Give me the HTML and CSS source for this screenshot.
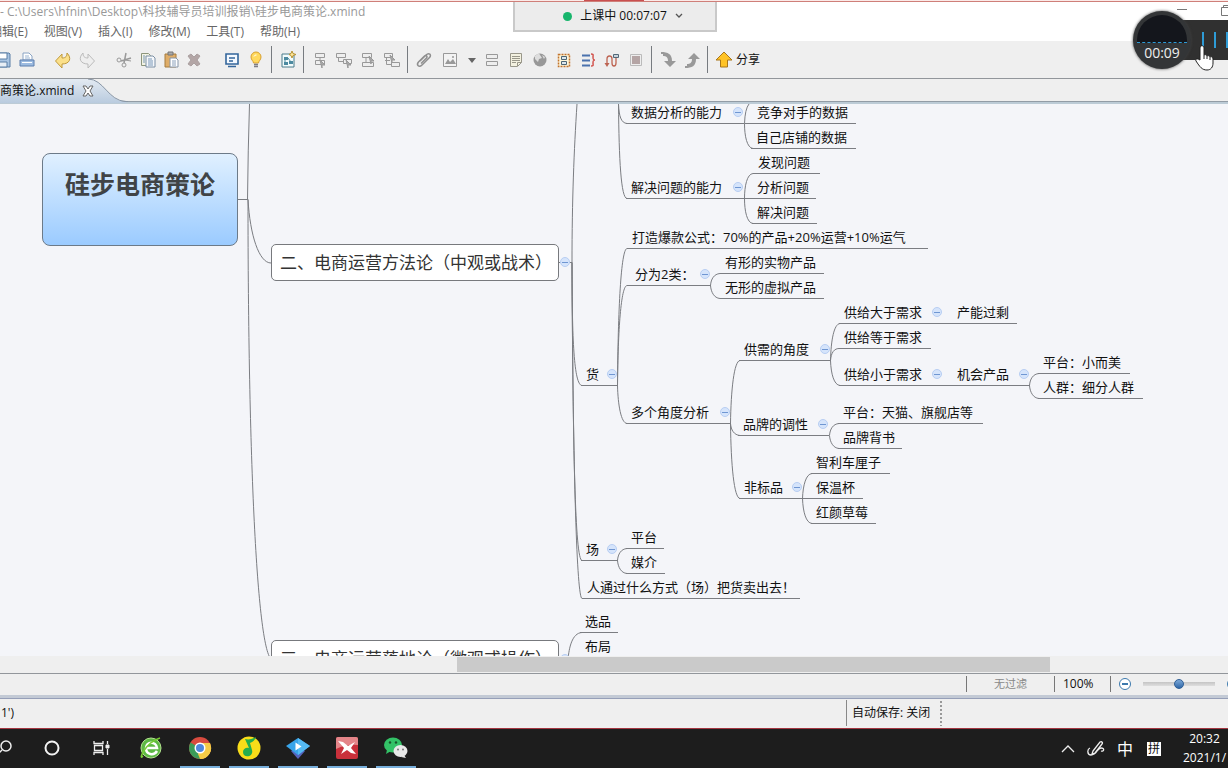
FILE: index.html
```html
<!DOCTYPE html>
<html lang="zh-CN">
<head>
<meta charset="utf-8">
<title>硅步电商策论.xmind</title>
<link rel="stylesheet" href="styles.css">
</head>
<body>
<header class="titlebar">
  <span class="path">- C:\Users\hfnin\Desktop\科技辅导员培训报销\硅步电商策论.xmind</span>
  <span class="winbtns">
    <svg width="56" height="12" viewBox="0 0 56 12" fill="none" stroke="#777"><path d="M5 5.500h10M49.500 3.500h9v8h-9zM51.500 3.500v-2h6"/></svg>
  </span>
</header>
<nav class="menubar">
  <button>编辑(E)</button><button>视图(V)</button><button>插入(I)</button><button>修改(M)</button><button>工具(T)</button><button>帮助(H)</button>
</nav>
<div class="toolbar">
  <div class="group g-file">
    <button aria-label="保存"><svg viewBox="0 0 20 20"><path d="M3 3h13l1 1v13H3z" fill="#a9c4e2" stroke="#5b7fa6"/><path d="M6 3h8v6H6z" fill="#fff" stroke="#5b7fa6"/><path d="M6 12h8v5H6z" fill="#e8eef5" stroke="#5b7fa6"/></svg></button>
    <button aria-label="打印"><svg viewBox="0 0 20 20"><path d="M6 10V3h6l3 3v4z" fill="#fff" stroke="#8aa4c4"/><path d="M8 6h4M8 8h5" stroke="#9bb4d0"/><path d="M3 10h14v6H3z" fill="#9dbbe0" stroke="#5c7fae"/><path d="M5 12.500h10" stroke="#fff"/></svg></button>
  </div>
  <div class="group g-undo">
    <button aria-label="撤销"><svg viewBox="0 0 20 20"><path d="M2.500 11l6.500-7v4c4 0 5-2 5-5 5 5 3 11-5 11v4z" fill="#fbe08a" stroke="#c09a3c"/></svg></button>
    <button aria-label="重做"><svg viewBox="0 0 20 20"><path d="M17.500 11l-6.500-7v4c-4 0-5-2-5-5-5 5-3 11 5 11v4z" fill="#eee" stroke="#bbb"/></svg></button>
  </div>
  <div class="group g-edit">
    <button aria-label="剪切"><svg viewBox="0 0 20 20" fill="none" stroke="#999"><path d="M11 3L9 13M16 8L6 11" stroke-width="1.500"/><circle cx="9" cy="15" r="2"/><circle cx="4" cy="10" r="2"/><path d="M10 10l6 1"/></svg></button>
    <button aria-label="复制"><svg viewBox="0 0 20 20"><path d="M3.500 3.500h7l2 2v10h-9z" fill="#f3f3e4" stroke="#8c957b"/><path d="M8 6h7l2 2v9H8z" fill="#f6f8fb" stroke="#7b8fa5"/><path d="M10 9h4M10 11h5M10 13h5M10 15h5M5 6h2M5 8h2M5 10h2M5 12h2" stroke="#7897b7"/></svg></button>
    <button aria-label="粘贴"><svg viewBox="0 0 20 20"><path d="M4 4h11v13H4z" fill="#dfad68" stroke="#a67c3e"/><path d="M7 2h5v3H7z" fill="#aaa" stroke="#777"/><path d="M9 8h6l2 2v7H9z" fill="#fff" stroke="#8595a8"/><path d="M11 11h4M11 13h4M11 15h4" stroke="#8aa0ba"/></svg></button>
    <button aria-label="删除"><svg viewBox="0 0 20 20"><path d="M4 6l3-2 3 3 3-3 3 2-3 4 3 4-3 2-3-3-3 3-3-2 3-4z" fill="#b3a6a6" stroke="#aaa0a0"/></svg></button>
  </div>
  <div class="group g-show">
    <button aria-label="演示"><svg viewBox="0 0 20 20"><path d="M4 4h12v10H4z" fill="#f4f9ff" stroke="#33669c" stroke-width="1.600"/><path d="M6 16.500h8M7 8h6M7 11h4" stroke="#33669c" stroke-width="1.300"/></svg></button>
    <button aria-label="灵感"><svg viewBox="0 0 20 20"><path d="M7.500 13c0-2-2.500-3-2.500-6a5 5 0 0110 0c0 3-2.500 4-2.500 6z" fill="#ffd95e" stroke="#d8a030"/><path d="M8 6.500q1-2 2.500-1.500" stroke="#fff" fill="none"/><path d="M8 14.500h4M8 16.500h4" stroke="#7d7d86" stroke-width="1.500"/></svg></button>
  </div>
  <span class="sep"></span>
  <div class="group">
    <button aria-label="导图"><svg viewBox="0 0 20 20"><path d="M4 4h12v13H4z" fill="#f3fbfb" stroke="#4a7c8c"/><path d="M6 7h4v3H6zM6 12h4v3H6zM11 11h4v3h-4z" fill="#4c8aa0"/><path d="M10 8l3 4M7 10v3" stroke="#4c8aa0"/><path d="M14 1l1 2.500 3 1-3 1-1 2.500-1-2.500-2-1 2-1z" fill="#ffe79a" stroke="#b79334"/></svg></button>
  </div>
  <span class="sep"></span>
  <div class="group">
    <button aria-label="主题"><svg viewBox="0 0 20 20" fill="#eee" stroke="#999"><path d="M5.500 3.500h9v4h-9zM5.500 10.500h9v4h-9zM10 7.500v3"/><path d="M10 10l5 5h-3v3z" fill="#aaa"/></svg></button>
    <button aria-label="子主题"><svg viewBox="0 0 20 20" fill="#eee" stroke="#999"><path d="M2.500 3.500h9v4h-9zM9.500 9.500h8v4h-8zM4.500 7.500v4h5"/><path d="M12 10l5 5h-3v3z" fill="#aaa"/></svg></button>
    <button aria-label="上方主题"><svg viewBox="0 0 20 20" fill="#eee" stroke="#999"><path d="M4.500 3.500h9v4h-9zM4.500 12.500h11v4h-11zM8 7.500v5"/><path d="M11 6l5 5h-3v3z" fill="#aaa"/></svg></button>
    <button aria-label="父主题"><svg viewBox="0 0 20 20" fill="#eee" stroke="#999"><path d="M2.500 3.500h8v4h-8zM9.500 12.500h8v4h-8zM4.500 7.500v7h5M3 10.500h5"/><path d="M8 5l5 5h-3v3z" fill="#aaa"/></svg></button>
  </div>
  <span class="sep"></span>
  <div class="group g-insert">
    <button aria-label="附件"><svg viewBox="0 0 20 20" fill="none" stroke="#8e8e8e" stroke-width="1.500"><path d="M6 11l6-6c3-3 6 0 3.500 2.500L8 15c-3 3-6 0-3.500-3l5.500-5.500c2-2 4 0 2.500 1.500L7 13.500"/></svg></button>
  </div>
  <div class="group g-image">
    <button aria-label="图片"><svg viewBox="0 0 20 20"><path d="M3.500 3.500h13v13h-13z" fill="#f3f3f3" stroke="#999"/><path d="M5 14l3-5 2 3 3-3 3 5z" fill="#999"/><circle cx="13" cy="7" r="1" fill="#999"/></svg></button>
    <button class="arrow" aria-label="图片选项"><svg viewBox="0 0 20 20"><path d="M6 8h8l-4 5z" fill="#666"/></svg></button>
  </div>
  <div class="group g-more">
    <button aria-label="标签"><svg viewBox="0 0 20 20" fill="#eee" stroke="#999"><path d="M4.500 4.500h11v4h-11zM4.500 11.500h11v4h-11z"/></svg></button>
    <button aria-label="备注"><svg viewBox="0 0 20 20"><path d="M4.500 3.500h11v9l-4 4h-7z" fill="#f3f1e0" stroke="#99978a"/><path d="M6 6.500h8M6 8.500h8M6 10.500h8M6 12.500h4M11.500 16v-3.500h4" stroke="#99978a" fill="none"/></svg></button>
    <button aria-label="超链接"><svg viewBox="0 0 20 20"><circle cx="10" cy="10" r="6.500" fill="#989898"/><path d="M5 6q4-4 5-1l2 3-3 1-1 3-3-3zM12 5l3 2-1 2z" fill="#ddd"/></svg></button>
    <button aria-label="外框"><svg viewBox="0 0 20 20"><path d="M4.500 4.500h11v12h-11z" fill="#fff6d8" stroke="#c2742c" stroke-width="1.500" stroke-dasharray="2 1"/><path d="M7.500 6.500h5v3h-5zM7.500 11.500h5v3h-5z" fill="#dde8ee" stroke="#4d6675"/></svg></button>
    <button aria-label="概要"><svg viewBox="0 0 20 20" fill="none"><path d="M4 5.500h8M4 10.500h8M4 15.500h8" stroke="#4b72ad" stroke-width="2"/><path d="M13 4c3 0 2 1 2 3s0 3 2 3c-2 0-2 1-2 3s1 3-2 3" stroke="#d2544e" stroke-width="1.500"/></svg></button>
    <button aria-label="联系"><svg viewBox="0 0 20 20" fill="none"><path d="M5 15V9c0-4 5-4 5 0v4c0 4 4 4 4 0V8" stroke="#bd6452" stroke-width="1.300"/><path d="M2.500 13l2.500 4 2.500-4z" fill="#bd6452"/><path d="M11.500 4.500h5v3h-5z" fill="#c9d4dc" stroke="#526878"/></svg></button>
    <button aria-label="图例"><svg viewBox="0 0 20 20"><path d="M4.500 4.500h11v11h-11z" fill="#eee" stroke="#bbb"/><path d="M6 6h8v8H6z" fill="#b5a5a5"/></svg></button>
  </div>
  <span class="sep"></span>
  <div class="group">
    <button aria-label="向下"><svg viewBox="0 0 20 20"><path d="M3 2c7 0 11 2 11 9h4l-6 6-6-6h4c0-4-2-5-5-5V4H3z" fill="#999"/></svg></button>
    <button aria-label="向上"><svg viewBox="0 0 20 20"><path d="M3 18c7 0 11-2 11-9h4l-6-6-6 6h4c0 4-2 5-5 5v2H3z" fill="#999"/></svg></button>
  </div>
  <span class="sep"></span>
  <button class="share"><svg viewBox="0 0 20 20"><path d="M10 2l8 8h-4.500v7h-7v-7H2z" fill="#ffc326" stroke="#a9761b"/></svg>分享</button>
</div>
<div class="tabs">
  <div class="tab">
    <svg class="tabshape" width="128" height="24" viewBox="0 0 128 24"><defs><linearGradient id="tg" x2="0" y2="1"><stop offset="0" stop-color="#e3eaf2"/><stop offset="1" stop-color="#b9cbdf"/></linearGradient></defs><path d="M0 0H88C104 0 108 22 126 23V24H0z" fill="url(#tg)"/><path d="M88 0C104 0 108 22 126 22.500h2" fill="none" stroke="#8795a5"/></svg>
    <span class="tabname">电商策论.xmind</span>
    <button class="close" aria-label="关闭"><svg width="12" height="12" viewBox="0 0 12 12"><path d="M1 1h3l2 3 2-3h3L8 6l3 5H8L6 8l-2 3H1l3-5z" fill="#fff" stroke="#666"/></svg></button>
  </div>
</div>
<main class="canvas">
  <svg class="links" width="1228" height="552" viewBox="0 104 1228 552" fill="none" stroke="#7b7d82">
    <path d="M238 199.500h10M247.500 199.500Q248 150 249.500 104M248 199.500C250 235 259 263 271 263M248 199.500C248 460 257 645 271 659"/>
    <path d="M559 262.500h13M572 262.500C572 200 574 150 577 104M572 262.500C572 340 574 385 582 385.500M572 262.500C573 450 575 560 582 560.500M572 262.500C573 480 577 598 582 598.500M559 659.500h9C569 648 572 633 582 632.500"/>
    <path d="M618.500 104C619 116 621 123 627 123.500M618.500 104C619 160 621 198 627 198.500"/>
    <path d="M744.500 123.500Q745 109 749 104M744.500 123.500C744.500 136 747 148 753 148.500M744.500 123.500h8"/>
    <path d="M744.500 198.500C744.500 186 747 174 753 173.500M744.500 198.500C744.500 211 747 223 753 223.500"/>
    <path d="M617.500 385.500C618 310 621 249 627 248.500M617.500 385.500C618 330 621 286 627 285.500M617.500 385.500C618 405 621 423 627 423.500"/>
    <path d="M710.500 285.500C711 279 714 274 720 273.500M710.500 285.500C711 292 714 298 720 298.500"/>
    <path d="M730.500 423.500C731 390 734 361 740 360.500M730.500 423.500C731 430 734 435 740 435.500M730.500 423.500C731 465 734 498 740 498.500"/>
    <path d="M830.500 360.500C831 340 834 324 840 323.500M830.500 360.500C831 353 834 348 840 348.500M830.500 360.500C831 374 834 385 840 385.500"/>
    <path d="M1029.500 385.500C1030 379 1033 374 1039 373.500M1029.500 385.500C1030 392 1033 398 1039 398.500"/>
    <path d="M829.500 435.500C830 429 833 424 839 423.500M829.500 435.500C830 442 833 448 839 448.500"/>
    <path d="M802.500 498.500C803 485 806 474 812 473.500M802.500 498.500C803 512 806 523 812 523.500"/>
    <path d="M617.500 560.500C618 554 621 549 627 548.500M617.500 560.500C618 567 621 573 627 573.500"/>
  </svg>
  <h1 class="root">硅步电商策论</h1>
  <div class="main main-method">二、电商运营方法论（中观或战术）</div>
  <button class="fold fold-method" aria-label="折叠"></button>
  <div class="main main-practice">三、电商运营落地论（微观或操作）</div>
  <button class="fold fold-practice" aria-label="折叠"></button>

  <div class="node data-skill">数据分析的能力<button class="fold" aria-label="折叠"></button></div>
  <div class="node rival-data">竞争对手的数据</div>
  <div class="node own-data">自己店铺的数据</div>
  <div class="node solve-skill">解决问题的能力<button class="fold" aria-label="折叠"></button></div>
  <div class="node find">发现问题</div>
  <div class="node analyse">分析问题</div>
  <div class="node solve">解决问题</div>
  <div class="node formula">打造爆款公式：70%的产品+20%运营+10%运气</div>
  <div class="node two-kinds">分为2类：<button class="fold" aria-label="折叠"></button></div>
  <div class="node tangible">有形的实物产品</div>
  <div class="node virtual">无形的虚拟产品</div>
  <div class="node goods">货<button class="fold" aria-label="折叠"></button></div>
  <div class="node angles">多个角度分析<button class="fold" aria-label="折叠"></button></div>
  <div class="node supply">供需的角度<button class="fold" aria-label="折叠"></button></div>
  <div class="node supply-more">供给大于需求<button class="fold" aria-label="折叠"></button></div>
  <div class="node surplus">产能过剩</div>
  <div class="node supply-equal">供给等于需求</div>
  <div class="node supply-less">供给小于需求<button class="fold" aria-label="折叠"></button></div>
  <div class="node chance">机会产品<button class="fold" aria-label="折叠"></button></div>
  <div class="node small">平台：小而美</div>
  <div class="node crowd">人群：细分人群</div>
  <div class="node brand">品牌的调性<button class="fold" aria-label="折叠"></button></div>
  <div class="node tmall">平台：天猫、旗舰店等</div>
  <div class="node endorse">品牌背书</div>
  <div class="node nonstandard">非标品<button class="fold" aria-label="折叠"></button></div>
  <div class="node cherry">智利车厘子</div>
  <div class="node cup">保温杯</div>
  <div class="node berry">红颜草莓</div>
  <div class="node place">场<button class="fold" aria-label="折叠"></button></div>
  <div class="node platform">平台</div>
  <div class="node media">媒介</div>
  <div class="node sell">人通过什么方式（场）把货卖出去！</div>
  <div class="node choose">选品</div>
  <div class="node arrange">布局</div>
</main>
<div class="hscroll"><div class="thumb"></div></div>
<div class="viewbar">
  <span class="filter">无过滤</span>
  <span class="percent">100%</span>
  <div class="zoom">
    <button aria-label="缩小"><svg width="14" height="14" viewBox="0 0 14 14" fill="#fff" stroke="#3c79ad"><circle cx="7" cy="7" r="5.500"/><path d="M4 7h6" stroke-width="2"/></svg></button>
    <input type="range" min="0" max="100" value="50" aria-label="缩放">
    <button aria-label="放大"><svg width="14" height="14" viewBox="0 0 14 14" fill="#fff" stroke="#3c79ad"><circle cx="7" cy="7" r="5.500"/><path d="M4 7h6M7 4v6" stroke-width="2"/></svg></button>
  </div>
</div>
<footer class="statusbar">
  <span>1')</span>
  <span class="autosave">自动保存: 关闭</span>
</footer>
<div class="taskbar">
  <div class="apps">
    <button aria-label="搜索"><svg viewBox="0 0 24 24" fill="none" stroke="#eee" stroke-width="1.500"><circle cx="14" cy="10" r="5"/><path d="M10 14l-5 5"/></svg></button>
    <button aria-label="Cortana"><svg viewBox="0 0 24 24" fill="none" stroke="#f2f2f2" stroke-width="2"><circle cx="11" cy="12" r="6.500"/></svg></button>
    <button aria-label="任务视图"><svg viewBox="0 0 24 24" fill="none" stroke="#eee"><path d="M4 5v2.500h9V5M4 19v-2.500h9V19M4.500 9.500h8v5h-8zM17.500 5v3M17.500 13v6" stroke-width="1.300"/><path d="M16 9h3v3h-3z" fill="#eee"/></svg></button>
    <button aria-label="浏览器"><svg viewBox="0 0 24 24"><circle cx="12" cy="12" r="10" fill="#5db944"/><circle cx="12" cy="12" r="10" fill="none" stroke="#b3e48e"/><path d="M18 15c-3 5-11 4-11-3s10-7 11 0H8" fill="none" stroke="#fff" stroke-width="2.500"/><path d="M4 20C-1 26 5 7 21 2" fill="none" stroke="#78cd35" stroke-width="1.500"/></svg></button>
    <button class="on" aria-label="Chrome"><svg viewBox="0 0 24 24"><circle cx="12" cy="12" r="11" fill="#d84b3f"/><path d="M12 12L2.500 6.500A11 11 0 0012 23z" fill="#3b9b58"/><path d="M12 12h11a11 11 0 01-11 11l-2-5z" fill="#f5cb46"/><path d="M12 7h10a11 11 0 01-10 16l5-8z" fill="#f5cb46"/><circle cx="12" cy="12" r="5.500" fill="#fff"/><circle cx="12" cy="12" r="4" fill="#4f87dd"/></svg></button>
    <button class="on" aria-label="QQ音乐"><svg viewBox="0 0 24 24"><circle cx="12" cy="12" r="11.500" fill="#f9dd19"/><path d="M8 3c4 1 7 0 11-2-1 3-3 5-6 6l2 7c2 7-9 9-9 2 0-3 3-5 6-4z" fill="#25ad4d"/></svg></button>
    <button class="on" aria-label="课堂"><svg viewBox="0 0 24 24"><path d="M5 15l7 8 7-8-7-4z" fill="#5564bd"/><path d="M12 2l12 8-12 9L0 10z" fill="#38a4ea"/><path d="M12 2l12 8-12 9z" fill="#55bbf5"/><path d="M9.500 6.500l6 4-6 4z" fill="#fff"/></svg></button>
    <button class="on" aria-label="XMind"><svg viewBox="0 0 24 24"><rect x="1" y="1" width="22" height="22" rx="2" fill="#c9303b"/><path d="M1 3q0-2 2-2h18q2 0 2 2v6Q12 8 1 13z" fill="#e48589"/><path d="M3 5l5 1 5 4 7-4-4 6 5 6-5-1-4-3-6 4 3-6z" fill="#fff"/></svg></button>
    <button class="on" aria-label="微信"><svg viewBox="0 0 24 24"><ellipse cx="9" cy="9" rx="9" ry="7.500" fill="#33c267"/><path d="M3 14l-1 4 5-3z" fill="#33c267"/><circle cx="6" cy="6.500" r="1.200" fill="#17552c"/><circle cx="12" cy="6.500" r="1.200" fill="#17552c"/><ellipse cx="16.500" cy="15" rx="7" ry="6" fill="#e9e9e9"/><path d="M20 19l2 3-5-1z" fill="#e9e9e9"/><circle cx="14" cy="13.500" r="1" fill="#777"/><circle cx="19" cy="13.500" r="1" fill="#777"/></svg></button>
  </div>
  <div class="tray">
    <button aria-label="显示隐藏的图标"><svg width="14" height="14" viewBox="0 0 14 14" fill="none" stroke="#eee" stroke-width="1.300"><path d="M1 10l6-6 6 6"/></svg></button>
    <button aria-label="墨迹"><svg width="18" height="18" viewBox="0 0 18 18" fill="none" stroke="#eee" stroke-width="1.300"><path d="M6 11l7-9c2-1 3 1 2 2l-7 9-3 1zM3 8c-3 1-3 7 1 7 6 0 6-7 10-7 4 0 3 4 0 3"/></svg></button>
    <button class="ime">中</button>
    <button class="pinyin">拼</button>
    <div class="clock"><span>20:32</span><span>2021/1/</span></div>
  </div>
</div>
<div class="redline"></div>
<div class="class-status"><span class="dot"></span>上课中 00:07:07<svg width="8" height="6" viewBox="0 0 8 6" fill="none" stroke="#555" stroke-width="1.300"><path d="M1 1l3 3 3-3"/></svg></div>
<div class="recorder">
  <div class="bars"><i></i><i></i><i></i></div>
  <div class="dial"><span class="wave"></span><span class="time">00:09</span></div>
  <svg class="hand" width="20" height="26" viewBox="0 0 20 26"><path d="M6 15V3c0-3 4-3 4 0v7c1-1 3 0 3 1 1-1 3 0 3 1 1-1 3 0 3 2v4c0 4-2 7-6 7-5 0-7-3-11-9-1-2 1-3 4-1z" fill="#fff" stroke="#222"/><path d="M10 10v4M13 11v3M16 12v3" stroke="#222"/></svg>
</div>
</body>
</html>
```

FILE: styles.css
```css
* { box-sizing: border-box; }
body {
  margin: 0;
  height: 100vh;
  display: flex;
  flex-direction: column;
  position: relative;
  overflow: hidden;
  background: #efefef;
  color: #111;
  font: 12px/16px "Open Sans", "Noto Sans CJK SC", sans-serif;
  white-space: nowrap;
}
button {
  border: 0;
  padding: 0;
  background: none;
  color: inherit;
  font: inherit;
}
svg { display: block; flex: none; }

.titlebar {
  height: 23px;
  flex: none;
  display: flex;
  justify-content: space-between;
  align-items: flex-start;
  padding-top: 4px;
  background: #fff;
  color: #999;
}
.menubar {
  height: 18px;
  flex: none;
  display: flex;
  gap: 16px;
  padding-bottom: 1px;
  background: #fff;
  color: #666;
}
.menubar button:first-child { margin-left: -10px; }

.toolbar {
  height: 38px;
  flex: none;
  display: flex;
  align-items: center;
  border-bottom: 1px solid #92969b;
}
.group { display: flex; gap: 4px; }
.group button, .group svg { width: 20px; height: 20px; }
.g-file { margin-left: -7px; }
.g-undo { margin-left: 16px; }
.g-edit { margin-left: 18px; gap: 3px; }
.g-show { margin-left: 18px; }
.g-image { margin-left: 6px; gap: 2px; }
.g-more { margin-left: 0; }
.sep {
  width: 1px;
  height: 27px;
  margin: 0 6px 0 5px;
  background: #777b80;
}
.share { display: flex; align-items: center; gap: 2px; }
.share svg { width: 20px; height: 20px; }

.tabs {
  height: 25px;
  flex: none;
  border-bottom: 2px solid #bccbd6;
  box-shadow: inset 0 -1px #929ca6;
}
.tab {
  width: 128px;
  height: 24px;
  display: flex;
  align-items: center;
  gap: 8px;
  position: relative;
}
.tabshape { position: absolute; left: 0; top: 0; }
.tabname { position: relative; margin-left: -12px; }
.close { position: relative; }

.canvas {
  flex: 1;
  min-height: 0;
  position: relative;
  overflow: hidden;
  background: #f4f5f9;
}
.links { position: absolute; left: 0; top: 0; }
.root {
  position: absolute;
  left: 42px;
  top: 49px;
  width: 196px;
  height: 93px;
  margin: 0;
  padding-top: 13px;
  border: 1px solid #6c7a88;
  border-radius: 8px;
  background: linear-gradient(#e0f0ff, #9bcbff);
  color: #404346;
  font: bold 25px/32px "Noto Sans CJK SC", sans-serif;
  text-align: center;
}
.main {
  position: absolute;
  left: 271px;
  width: 288px;
  height: 37px;
  padding-left: 8px;
  border: 1px solid #77797d;
  border-radius: 5px;
  background: #fff;
  color: #333;
  font: 17px/33px "Noto Sans CJK SC", sans-serif;
}
.main-method { top: 140px; }
.main-practice { top: 536px; }
.fold {
  flex: none;
  width: 10px;
  height: 10px;
  border: 1px solid #b8cef3;
  border-radius: 50%;
  background: linear-gradient(#6f96d2, #6f96d2) center / 6px 1px no-repeat #d5e4fb;
}
.fold-method { position: absolute; left: 560px; top: 153px; }
.fold-practice { position: absolute; left: 560px; top: 550px; }
.node {
  position: absolute;
  height: 23px;
  display: flex;
  justify-content: space-between;
  align-items: center;
  padding: 0 1px 0 5px;
  border-bottom: 1px solid #7b7d82;
  font-size: 13px;
  line-height: 20px;
}
.data-skill { left: 626px; top: -3px; width: 118px; }
.rival-data { left: 752px; top: -3px; width: 104px; }
.own-data { left: 751px; top: 22px; width: 105px; }
.solve-skill { left: 626px; top: 72px; width: 118px; }
.find { left: 753px; top: 47px; width: 67px; }
.analyse { left: 744px; top: 72px; width: 72px; padding-left: 13px; }
.solve { left: 752px; top: 97px; width: 65px; }
.formula { left: 627px; top: 122px; width: 301px; }
.two-kinds { left: 627px; top: 159px; width: 84px; padding-left: 8px; }
.tangible { left: 720px; top: 147px; width: 104px; }
.virtual { left: 720px; top: 172px; width: 104px; }
.goods { left: 581px; top: 259px; width: 37px; }
.angles { left: 626px; top: 297px; width: 105px; }
.supply { left: 739px; top: 234px; width: 92px; }
.supply-more { left: 839px; top: 197px; width: 104px; }
.surplus { left: 943px; top: 197px; width: 74px; padding-left: 14px; }
.supply-equal { left: 839px; top: 222px; width: 92px; }
.supply-less { left: 839px; top: 259px; width: 104px; }
.chance { left: 943px; top: 259px; width: 87px; padding-left: 14px; }
.small { left: 1038px; top: 247px; width: 92px; }
.crowd { left: 1038px; top: 272px; width: 105px; }
.brand { left: 738px; top: 309px; width: 91px; }
.tmall { left: 838px; top: 297px; width: 145px; }
.endorse { left: 838px; top: 322px; width: 64px; }
.nonstandard { left: 739px; top: 372px; width: 64px; }
.cherry { left: 811px; top: 347px; width: 79px; }
.cup { left: 803px; top: 372px; width: 60px; padding-left: 13px; }
.berry { left: 811px; top: 397px; width: 65px; }
.place { left: 581px; top: 434px; width: 37px; }
.platform { left: 626px; top: 422px; width: 38px; }
.media { left: 626px; top: 447px; width: 39px; }
.sell { left: 582px; top: 472px; width: 218px; }
.choose { left: 580px; top: 506px; width: 38px; }
.arrange { left: 580px; top: 531px; width: 38px; }

.hscroll {
  height: 17px;
  flex: none;
  padding: 1px 0;
  background: #efefef;
}
.thumb {
  width: 48.3%;
  height: 100%;
  margin-left: 37.2%;
  background: #cacaca;
}
.viewbar {
  height: 25px;
  flex: none;
  display: flex;
  justify-content: flex-end;
  align-items: center;
  padding-bottom: 2px;
  border-top: 1px solid #92969b;
  border-bottom: 3px solid #c3cad5;
}
.filter, .percent, .zoom { border-left: 1px solid #777; }
.filter { width: 88px; color: #888; font-size: 11px; text-align: center; }
.percent { width: 56px; padding-left: 8px; }
.zoom {
  width: 118px;
  height: 16px;
  display: flex;
  align-items: center;
  gap: 11px;
  padding-left: 7px;
  overflow: hidden;
}
.zoom input {
  flex: none;
  width: 72px;
  height: 14px;
  margin: 0;
  appearance: none;
  background: linear-gradient(#c4c4c4, #dedede) center / 100% 4px no-repeat;
}
.zoom input::-webkit-slider-thumb {
  appearance: none;
  width: 10px;
  height: 10px;
  border: 1px solid #2f5f96;
  border-radius: 50%;
  background: linear-gradient(#7da9d8, #2f67a8);
}
.statusbar {
  height: 30px;
  flex: none;
  display: flex;
  justify-content: space-between;
  align-items: center;
  padding: 0 0 2px 1px;
  border-top: 1px solid #969fb8;
}
.autosave {
  width: 382px;
  padding: 5px 0 5px 5px;
  border-left: 1px solid #888;
  background: radial-gradient(circle, #999 1px, transparent 1px) 92px 0 / 4px 4px repeat-y;
}

.taskbar {
  height: 40px;
  flex: none;
  display: flex;
  justify-content: space-between;
  border-top: 1px solid #a33540;
  background: #1d1d1d;
  color: #fff;
}
.apps { display: flex; gap: 9px; margin-left: -16px; }
.apps button {
  width: 40px;
  display: flex;
  justify-content: center;
  align-items: center;
  border-bottom: 2px solid transparent;
}
.apps svg { width: 24px; height: 24px; }
.apps .on { border-color: #77aedb; }
.tray { display: flex; align-items: center; gap: 12px; }
.ime { font-size: 16px; line-height: 20px; }
.pinyin {
  width: 14px;
  height: 14px;
  margin-left: 2px;
  background: #fff;
  color: #111;
  line-height: 14px;
}
.clock {
  width: 47px;
  display: flex;
  flex-direction: column;
  align-items: center;
  gap: 3px;
  margin-left: 8px;
}

.redline {
  position: absolute;
  inset: 0 0 auto;
  height: 2px;
  border-bottom: 1px solid #cf7f79;
  background: linear-gradient(#c94f50, #c94f50) center / 60px 2px no-repeat #fbeae8;
}
.class-status {
  position: absolute;
  left: 513px;
  top: 2px;
  width: 204px;
  height: 30px;
  display: flex;
  justify-content: center;
  align-items: center;
  gap: 8px;
  padding-left: 16px;
  border: solid #c9c9c9;
  border-width: 0 2px 2px;
  background: #ececec;
}
.dot {
  width: 9px;
  height: 9px;
  border-radius: 50%;
  background: #17b56c;
}
.recorder {
  position: absolute;
  right: 0;
  top: 11px;
  width: 95px;
  height: 58px;
}
.bars {
  position: absolute;
  right: 0;
  top: 9px;
  width: 60px;
  height: 40px;
  display: flex;
  justify-content: flex-end;
  gap: 10px;
  padding-top: 12px;
  background: #303030;
}
.bars i { width: 2px; height: 16px; background: #2e9bd6; }
.dial {
  position: absolute;
  left: 0;
  top: 0;
  width: 58px;
  height: 58px;
  padding: 4px;
  border-radius: 50%;
  background: #333537;
  box-shadow: 0 0 3px #444;
  color: #eee;
  text-align: center;
}
.wave {
  display: block;
  height: 28px;
  border-bottom: 1px dashed #2e9bd6;
  border-radius: 25px 25px 0 0;
  background: #14161c;
}
.time { display: block; font-size: 14px; line-height: 20px; }
.hand { position: absolute; left: 61px; top: 34px; }
```
